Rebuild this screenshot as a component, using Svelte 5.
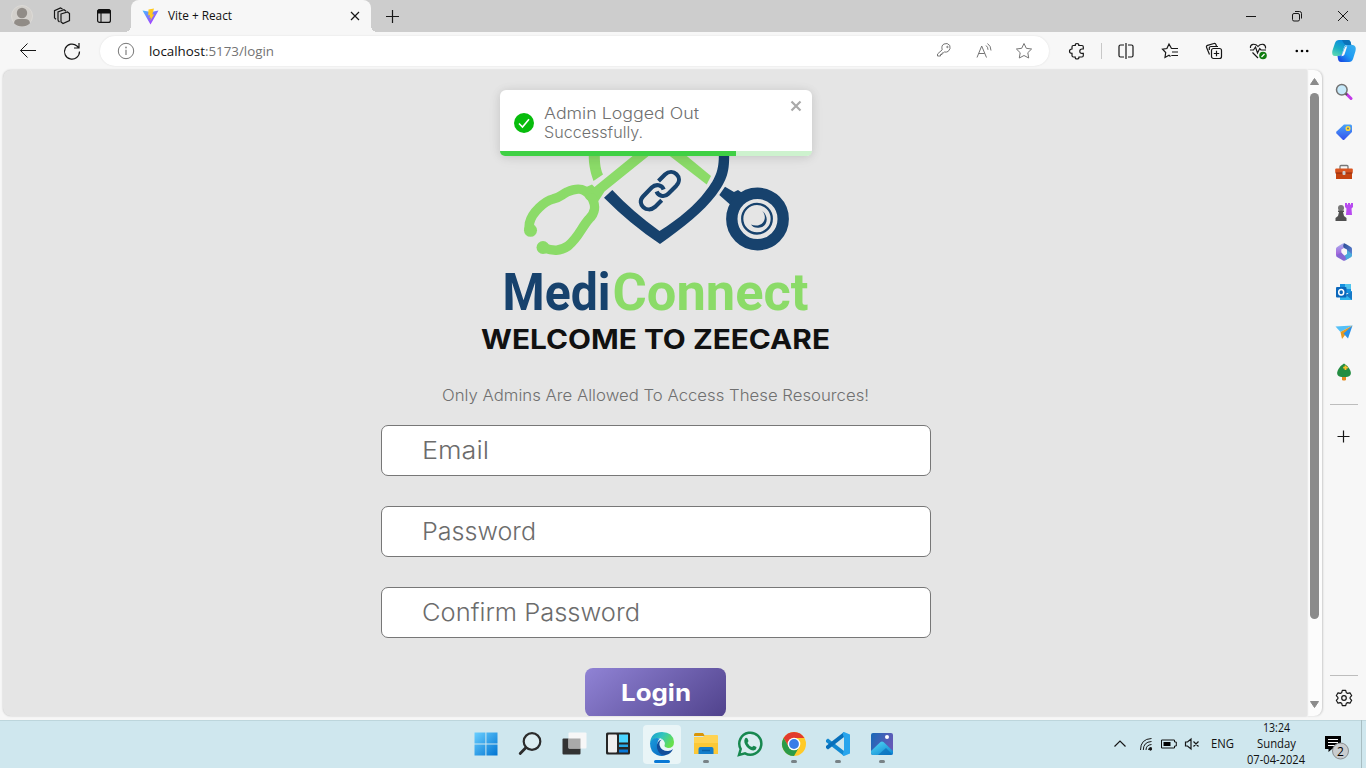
<script>
  const apps = ['start', 'search', 'tasks', 'widgets', 'edge', 'files', 'whatsapp', 'chrome', 'code', 'photos'];
  const running = ['files', 'chrome', 'code', 'photos'];
  const tools = ['lens', 'tag', 'case', 'chess', 'm365', 'outlook', 'drop', 'tree'];
  const fields = [
    { label: 'Email', w: 67 },
    { label: 'Password', w: 114 },
    { label: 'Confirm Password', w: 218 }
  ];
</script>

{#snippet fit(text, w, h, base, cls)}
  <svg class="fit {cls}" width={w} height={h}><text x="0" y={base} textLength={w} lengthAdjust="spacingAndGlyphs">{text}</text></svg>
{/snippet}

<div class="screen">
  <header class="titlebar">
    <span class="slot profile"><svg width="22" height="22" viewBox="0 0 22 22"><circle cx="11" cy="11" r="10.5" fill="#d3d0cc" stroke="#dcdad7" /><circle cx="11" cy="8" r="5.2" fill="#918c87" /><path d="M3 18.2Q3.500 14 8 14H14Q18.500 14 19 18.200Q15.500 21.500 11 21.500T3 18.200Z" fill="#918c87" /></svg></span>
    <span class="slot spaces"><svg width="18" height="18" viewBox="0 0 18 18" class="line bold"><path d="M8 7 14.500 5 16.500 6.500V13.500L10 16.500 8 15ZM5 13.500V5L11 2.800 13 4.300M5 13.500 6.500 15M1.500 11V3.700L7.500 1 9.500 2M1.500 11 3 12.300" /></svg></span>
    <span class="slot tabmenu"><svg width="16" height="16" viewBox="0 0 16 16"><rect x="1.600" y="1.600" width="12.800" height="12.800" rx="2" fill="none" stroke="#111" stroke-width="1.200" /><path d="M2 2H14V5H2Z" fill="#111" stroke="#111" /><path d="M5 5V14" stroke="#111" stroke-width="1.100" /></svg></span>
    <div class="tab">
      <svg width="17" height="17" viewBox="0 0 17 17">
        <defs><linearGradient id="v" x1="0" y1="0" x2=".8" y2="1"><stop offset="0" stop-color="#45bdff" /><stop offset="1" stop-color="#b42bff" /></linearGradient></defs>
        <path d="M.5 2.500 8.500 16.500 16.500 2.500 9 4Z" fill="url(#v)" /><path d="M12 .5 6.500 1.600 6.200 7.500 8 7.100 7.500 10 9 9.600 8.300 13 12.200 6.300 10.300 6.600Z" fill="#ffc91f" />
      </svg>
      <span class="name">{@render fit('Vite + React', 64, 16, 12, 'ui')}</span>
      <svg class="line bold" width="10" height="10" viewBox="0 0 10 10"><path d="M1 1 9 9M9 1 1 9" /></svg>
    </div>
    <span class="slot add"><svg class="line bold" width="15" height="15" viewBox="0 0 15 15"><path d="M7.500 1V14M1 7.500H14" /></svg></span>
    <div class="window">
      <span><svg class="line" width="12" height="12" viewBox="0 0 12 12"><path d="M1 6.500H11" /></svg></span>
      <span><svg class="line" width="12" height="12" viewBox="0 0 12 12"><rect x="1.500" y="3.500" width="7" height="7.500" rx="1.500" /><path d="M4 1.500H8.500Q10.500 1.500 10.500 3.500V8.500" /></svg></span>
      <span><svg class="line" width="12" height="12" viewBox="0 0 12 12"><path d="M1 1 11 11M11 1 1 11" /></svg></span>
    </div>
  </header>

  <div class="toolbar">
    <span class="nav"><svg class="line" width="20" height="20" viewBox="0 0 20 20"><path d="M18 9.500H2.500M9.500 2.500 2.500 9.500 9.500 16.500" /></svg></span>
    <span class="nav"><svg class="line" width="20" height="20" viewBox="0 0 20 20"><path d="M17.500 10.500A7.500 7.500 0 1 1 15 5L17 7M17 2V7H12" stroke-width="1.200" /></svg></span>
    <div class="address">
      <svg class="info" width="18" height="18" viewBox="0 0 18 18"><circle cx="9" cy="9" r="7.700" fill="none" stroke="#777" /><path d="M9 7.800V13" stroke="#888" stroke-width="1.300" /><circle cx="9" cy="5.500" r=".9" fill="#888" /></svg>
      <svg class="fit url" width="125" height="20"><text x="0" y="15" textLength="125" lengthAdjust="spacingAndGlyphs">localhost<tspan fill="#737373">:5173/login</tspan></text></svg>
      <div class="actions">
        <span><svg class="line soft" width="16" height="16" viewBox="0 0 16 16"><path d="M6.200 7.800Q5 3.500 8 2 11.500.300 13.800 3.500 15 7 12.200 9.400 10.300 10.500 8.300 10L7.200 11H6V12.500H4.500V14H1.500V12Z" /><circle cx="11.400" cy="5" r=".7" /></svg></span>
        <span><svg class="line soft" width="18" height="18" viewBox="0 0 18 18"><path d="M2 15.500 6.700 4 11.500 15.500M3.700 11.500H9.700M11 3.500Q13 5 13 7.800M12.500 1.500Q16 4 16 8.500" /></svg></span>
        <span><svg class="line soft" width="18" height="18" viewBox="0 0 18 18"><path d="M9 1.500 11.300 6.300 16.600 7 12.800 10.700 13.700 16 9 13.500 4.300 16 5.200 10.700 1.400 7 6.700 6.300Z" /></svg></span>
      </div>
    </div>
    <span class="ext"><svg class="line bold" width="18" height="18" viewBox="0 0 18 18"><path d="M5.200 3.500H7.300Q7 1.500 9 1.500T10.800 3.500H14Q15.300 3.500 15.300 5V7H14Q11.800 7 11.800 9.200T14 11.300H15.300V13.500Q15.300 15 14 15H11Q11 17 9 17T7.200 15H5.500Q4 15 4 13.500V11.300Q1.500 11.300 1.500 9.200T4 7V5Q4 3.500 5.200 3.500Z" /></svg></span>
    <i class="bar"></i>
    <div class="more">
      <span><svg class="line bold" width="18" height="18" viewBox="0 0 18 18"><path d="M7 3H3.500Q2 3 2 4.500V13.500Q2 15 3.500 15H7M11 3H14.500Q16 3 16 4.500V13.500Q16 15 14.500 15H11M9 1V17" /></svg></span>
      <span><svg class="line bold" width="18" height="18" viewBox="0 0 18 18"><path d="M10.500 6.500 8 2 5.900 6.500 1.500 7.200 4.700 10.500 4 15.500 8 13.300 9.500 14.500M10.300 6.500H17M11 10H17M10.300 13.500H17" /></svg></span>
      <span><svg class="line bold" width="18" height="18" viewBox="0 0 18 18"><rect x="6.500" y="6.500" width="10" height="10" rx="2" /><path d="M11.500 8.800V14.200M8.800 11.500H14.200M4.500 12.500 1.600 5.500Q1 4 2.500 3.400L9 1.500Q10.500 1.200 11 2.600L11.500 4.500M4.300 8V5.600Q4.500 4.500 6 4.500H13" /></svg></span>
      <span><svg class="line bold" width="18" height="18" viewBox="0 0 18 18"><path d="M1.500 6Q1 3 4 2.300 7 2 9 4.500 11 2 14 2.300 17 3 16.500 6.500M1 8H4.500L6.500 5 8.500 11 10.700 6.500 12 8H17M3.500 10.500 9 16" /><circle cx="14" cy="13.500" r="3.800" fill="#107c10" stroke="none" /><path d="M12.500 15 15.500 12" stroke="#fff" /></svg></span>
      <span><svg width="18" height="18" viewBox="0 0 18 18"><circle cx="3.800" cy="9" r="1.300" /><circle cx="9" cy="9" r="1.300" /><circle cx="14.200" cy="9" r="1.300" /></svg></span>
    </div>
    <svg class="copilot" width="26" height="24" viewBox="0 0 26 24">
      <defs><linearGradient id="c1" x1="0" y1="1" x2=".5" y2="0"><stop stop-color="#69dfae" /><stop offset=".5" stop-color="#1bafc4" /><stop offset="1" stop-color="#0c89df" /></linearGradient><linearGradient id="c2" x1="0" y1="1" x2="1" y2="0"><stop stop-color="#1537df" /><stop offset=".5" stop-color="#1e9cf4" /><stop offset="1" stop-color="#3bb0ee" /></linearGradient></defs>
      <path d="M8 1H17Q19 1 19.600 3L20.300 6H16Q13.500 6 12.800 9L11 15Q10 17 7 17H4Q.5 17 1.300 12L4 4Q5 1 8 1Z" fill="url(#c1)" />
      <path d="M11 1H17Q19 1 19.600 3L20.300 6H16Q13 6 11 1Z" fill="#0b72b8" />
      <path d="M18 23H10Q7.500 23 7 20L6.500 17Q10 17 11 15L13 9Q14 6 17 6H22Q25.700 7 24.500 12L22 20Q21 23 18 23Z" fill="url(#c2)" />
      <path d="M13.500 9.500Q14 7.300 16.200 7.300L13.500 15.500Q12.800 17.300 10.300 17.300Z" fill="#f7f7f7" />
    </svg>
  </div>

  <div class="body">
    <main>
      <div class="login">
        <svg class="logo" width="312" height="166" viewBox="500 154 312 166">
          <g fill="#8bdb68">
            <path d="M589 150C588 162 590 171 593.500 181L603 174.500C600 168 599.500 160 600 150Z" />
            <path d="M640 150H656L604.500 191.500 601 197 597 203 584 188 592 184.500 594.500 187Z" />
            <path d="M662 150H679.500L711 176 706.700 184.500Z" />
            <circle cx="530.500" cy="230.300" r="6.500" /><circle cx="543" cy="247.500" r="6.500" />
          </g>
          <g fill="none" stroke="#8bdb68" stroke-width="9.500" stroke-linecap="round">
            <path d="M590 196C584 187 576 188 567 192C561 195 559 198 553 199C545 201 532 212 529.500 223L529 229" />
            <path d="M592 198C596 206 596 212 589 219C581 228 579 237 568 246C560 251.500 553 251 544 248" />
          </g>
          <g fill="#17426d">
            <path d="M604 197.700 612.300 190Q633 212 659.500 231C680 218 695 205 705 192C717 177 719.500 168 718.700 150H729C730 172 727 180 716 195C703 212 684 227 660 244Q630 224 604 197.700Z" />
            <path d="M725 186.700 719.300 195 734 208 748 197 738 190 734 192Z" />
          </g>
          <circle cx="757.500" cy="219" r="25.700" fill="none" stroke="#17426d" stroke-width="11.400" />
          <circle cx="757" cy="218.700" r="14.800" fill="none" stroke="#17426d" stroke-width="2.300" />
          <path d="M762.300 211C769 216 768 226 760 227.500C756 228.500 752.500 227 751 224.500C755 226.300 760 226 763 222.500C766 218.500 765 214 762.300 211Z" fill="#17426d" />
          <g fill="none" stroke="#17426d" stroke-width="4.100">
            <path d="M658.500 181 665 174.500C673 167 684 177.500 676.300 185.700L668.300 193.700C664 198 658 195.500 656.600 191.500" />
            <path d="M661.700 200.200 655 206.900C647 214 636 204 643 196.500L651.700 187.500C656 183.500 662 185 663.700 189.500" />
          </g>
          <g class="brand">
            <text x="502.500" y="310" textLength="108" lengthAdjust="spacingAndGlyphs" fill="#17426d">Medi</text>
            <text x="612.500" y="310" textLength="196" lengthAdjust="spacingAndGlyphs" fill="#8bdb68">Connect</text>
          </g>
        </svg>
        <h1>{@render fit('WELCOME TO ZEECARE', 349, 36, 29, 'head')}</h1>
        <p>{@render fit('Only Admins Are Allowed To Access These Resources!', 427, 20, 16, 'sub')}</p>
        <form>
          {#each fields as f}
            <div class="field">{@render fit(f.label, f.w, 32, 24, 'hint')}</div>
          {/each}
          <button type="button">{@render fit('Login', 70, 32, 25, 'go')}</button>
        </form>
      </div>
      <div class="toast">
        <svg width="20" height="20" viewBox="0 0 20 20"><circle cx="10" cy="10" r="10" fill="#07bc0c" /><path d="M5 10.500 8.500 14 15 6.300" fill="none" stroke="#fff" stroke-width="1.600" /></svg>
        <div class="message">
          {@render fit('Admin Logged Out', 155, 19, 15, 'sub')}
          {@render fit('Successfully.', 99, 19, 15, 'sub')}
        </div>
        <svg class="dismiss" width="12" height="12" viewBox="0 0 12 12"><path d="M1.500 1.500 10.500 10.500M10.500 1.500 1.500 10.500" stroke="#a9a9a9" stroke-width="2.200" /></svg>
        <div class="progress"><i></i></div>
      </div>
    </main>
    <div class="scroll">
      <svg width="11" height="9" viewBox="0 0 11 9"><path d="M5.500 1.500 9.500 7.500H1.500Z" fill="#8b8b8b" stroke="#8b8b8b" stroke-linejoin="round" /></svg>
      <i></i>
      <svg class="down" width="11" height="9" viewBox="0 0 11 9"><path d="M5.500 7.500 9.500 1.500H1.500Z" fill="#8b8b8b" stroke="#8b8b8b" stroke-linejoin="round" /></svg>
    </div>
    <aside>
      {#each tools as t}
        <span class="tool">
          <svg width="18" height="18" viewBox="0 0 18 18">
            {#if t === 'lens'}
              <path d="M11.500 11 16 15.500" stroke="#c239e8" stroke-width="3" stroke-linecap="round" /><path d="M10 10 12 12" stroke="#555" stroke-width="2" /><circle cx="6.800" cy="6.700" r="5.300" fill="#c6e9fa" stroke="#737373" stroke-width="1.500" />
            {:else if t === 'tag'}
              <defs><linearGradient id="tg" x2="0" y2="1"><stop stop-color="#4aa3f8" /><stop offset="1" stop-color="#3552ed" /></linearGradient></defs>
              <path d="M9 1.500H15.500Q17 1.500 17 3V9L9.500 16.500Q8.500 17.500 7.500 16.500L1.500 10.500Q.7 9.500 1.500 8.500Z" fill="url(#tg)" /><circle cx="13" cy="5.500" r="1.800" fill="#678" stroke="#ffdc3c" stroke-width="1.500" />
            {:else if t === 'case'}
              <path d="M5 6V3.500Q5 2.500 6 2.500H12Q13 2.500 13 3.500V6" fill="none" stroke="#777" stroke-width="1.300" /><rect x=".2" y="5.500" width="17.600" height="4.500" rx="1" fill="#d9541f" /><path d="M1 10H17V16H1Z" fill="#c5430f" /><path d="M.5 10H17.500" stroke="#8c2a10" /><rect x="7.500" y="8" width="3" height="4" rx="1" fill="#ccc" />
            {:else if t === 'chess'}
              <path d="M10 0H12V1.500H13V0H15V1.500H16V0H18V4L16.500 5.500 17 12H11L11.500 5.500 10 4Z" fill="#b84af0" /><circle cx="6" cy="5" r="3" fill="#777" /><path d="M3 7.500H9V9H8L9 13 11.500 15V18H.5V15L3 13 4 9H3Z" fill="#505050" />
            {:else if t === 'm365'}
              <defs><linearGradient id="m1" x2="0" y2="1"><stop stop-color="#aab1ef" /><stop offset="1" stop-color="#a35bd8" /></linearGradient><linearGradient id="m2" x2="1" y2="1"><stop stop-color="#2b4b91" /><stop offset="1" stop-color="#6087db" /></linearGradient></defs>
              <path d="M9 .3Q7.500.300 1.800 4.200 1 4.800 1 6V12.500L6.300 11.300V6.500L10.800 4Z" fill="url(#m1)" /><path d="M9 .3Q10 .3 16.200 4.200 17 4.800 17 6V13L12 9.500V6.500L9 5Q7.500 2.500 9 .3Z" fill="url(#m2)" /><path d="M1 12.500 6.300 9.500 9.500 12.700 12 11.500 14 15 10 17.500Q9 18 8 17.500L2 14Q1 13.300 1 12.500Z" fill="#8666d4" /><path d="M12 7 17 11V12.500Q17 13.500 16 14.200L10 17.600Q12 15 9.500 12.700L12 11Z" fill="#49abdc" />
            {:else if t === 'outlook'}
              <path d="M5 1H16V10H5Z" fill="#1590df" /><path d="M10 1H16V6H10Z" fill="#50c5ee" /><path d="M5 8 11 12 17 8V17H5Z" fill="#2fb6ee" /><path d="M11 12 17 8V17Z" fill="#1679c7" /><rect x="1" y="4" width="10.500" height="10.500" rx="1" fill="#0b67bb" /><ellipse cx="6.200" cy="9.200" rx="2.500" ry="2.800" fill="none" stroke="#fff" stroke-width="1.500" />
            {:else if t === 'drop'}
              <path d="M.5 3.500 17.500 2.500 5.500 9Z" fill="#55c0f7" /><path d="M5.500 9 17.500 2.500 7 16Z" fill="#e69a22" /><path d="M8.500 10.500 17.500 2.500 13 15.500Z" fill="#2791eb" />
            {:else}
              <path d="M7 12H11V17Q9 18 7 17Z" fill="#e58a20" /><path d="M9 .5Q12 2 14.500 6 17 10 15 12.500 13.500 14 9 14T3 12.500Q1 10 3.500 6 6 2 9 .5Z" fill="#248d42" /><path d="M10.500 2.500V7M8.200 4.700H12.800" stroke="#ffc22c" stroke-width="1.800" />
            {/if}
          </svg>
        </span>
      {/each}
      <hr />
      <svg class="line bold plus" width="13" height="13" viewBox="0 0 13 13"><path d="M6.500 .5V12.500M.5 6.500H12.500" /></svg>
      <hr class="low" />
      <svg class="line bold gear" width="18" height="18" viewBox="0 0 18 18"><path d="M7.300 1.400H10.700L11.300 3.700 12.700 4.400 15 3.800 16.700 6.700 15.100 8.300V9.700L16.700 11.300 15 14.200 12.700 13.600 11.300 14.300 10.700 16.600H7.300L6.700 14.300 5.300 13.600 3 14.200 1.300 11.300 2.900 9.700V8.300L1.300 6.700 3 3.800 5.300 4.400 6.700 3.700Z" stroke-linejoin="round" /><circle cx="9" cy="9" r="2.300" /></svg>
    </aside>
  </div>

  <footer>
    <div class="apps">
      {#each apps as a}
        <span class="app" class:active={a === 'edge'}>
          <svg width="26" height="26" viewBox="0 0 26 26">
            {#if a === 'start'}
              <defs><linearGradient id="w" x2="1" y2="1"><stop stop-color="#6acfff" /><stop offset="1" stop-color="#0074d2" /></linearGradient></defs>
              <path d="M1.500 1.500H12.400V12.400H1.500ZM13.400 1.500H24.500V12.400H13.400ZM1.500 13.400H12.400V24.500H1.500ZM13.400 13.400H24.500V24.500H13.400Z" fill="url(#w)" />
            {:else if a === 'search'}
              <circle cx="15" cy="10.500" r="8.300" fill="#dcedf1" stroke="#2c2c2c" stroke-width="2.200" /><path d="M8.800 16.700 3.200 22.500" stroke="#2c2c2c" stroke-width="2.800" stroke-linecap="round" />
            {:else if a === 'tasks'}
              <rect x="1.500" y="7.500" width="18" height="16" rx="1" fill="#333" /><rect x="7.500" y="1.500" width="18" height="16" rx="1" fill="#f7f7f7" /><path d="M7.500 7.500H19.500V17.500H7.500Z" fill="#a9a9a9" />
            {:else if a === 'widgets'}
              <rect x="1" y="1.500" width="24" height="22" rx="1.500" fill="#252525" /><rect x="3" y="3.500" width="9" height="18" rx="1" fill="#eee" /><path d="M14 3.500H23V11.500H14Z" fill="#4bd4ff" /><path d="M14 13.500H23V16H14Z" fill="#26a9e8" /><path d="M14 18.500H23V21.500H14Z" fill="#0878d8" />
            {:else if a === 'edge'}
              <defs><linearGradient id="e1" x2="1" y2=".5"><stop stop-color="#1698d3" /><stop offset=".5" stop-color="#32c5bd" /><stop offset="1" stop-color="#66e04c" /></linearGradient><linearGradient id="e2" x2="1" y2="1"><stop stop-color="#199bdc" /><stop offset="1" stop-color="#0c67bf" /></linearGradient></defs>
              <path d="M1 12Q2 1 13 1 24 1 25 11 25 17 19 17 15 17 15.500 14.500 17 11 13 8 7 5 1 12Z" fill="url(#e1)" /><path d="M1 12Q4 5.500 11 7.500 8 10 8.500 14 9 23 17 24 13 26 8 24 1 21 1 12Z" fill="url(#e2)" /><path d="M13 8.500Q10 10 10.500 14 12 20 19 20 22 20 24 18 22 23 17 24 10 25 8 17 7 10 13 8.500Z" fill="#124e9b" /><path d="M14.500 13Q13 17 17 19 21 20 24 17 22 18 19 17 14 16 14.500 13Z" fill="#e9f5f7" />
            {:else if a === 'files'}
              <path d="M1 3.500Q1 2 2.500 2H10L12 5H1Z" fill="#d99508" /><path d="M1 6H10L12 4H24Q25 4 25 5V23H1Z" fill="#ffd352" /><path d="M1 12H25V23H1Z" fill="#fcc836" /><path d="M5.500 23V18Q5.500 16 7.500 16H18.500Q20.500 16 20.500 18V23Z" fill="#137dcb" /><path d="M9 19.500H17" stroke="#0860a5" stroke-width="1.500" />
            {:else if a === 'whatsapp'}
              <path d="M2 24 3.700 18A11 11 0 1 1 8 22.300Z" fill="#d8edf0" stroke="#17884f" stroke-width="2.500" /><path d="M8 7.500Q9 6 10.500 7.500L11.500 10 10.500 12Q12 15 15 16L16.700 14.700 19.500 16Q19.500 19 16.500 19.500 13 19.500 9.500 15.500 6 11 8 7.500Z" fill="#17884f" />
            {:else if a === 'chrome'}
              <circle cx="13" cy="13" r="12" fill="#ffca28" /><path d="M2.600 7A12 12 0 0 1 23.400 7H13L7.800 16Z" fill="#e23b2e" /><path d="M2.600 7 7.800 16 13 19 18.200 16 13 25A12 12 0 0 1 2.600 7Z" fill="#2b9b48" /><circle cx="13" cy="13" r="6.300" fill="#fff" /><circle cx="13" cy="13" r="4.900" fill="#397de8" />
            {:else if a === 'code'}
              <path d="M1 9 3 7.500 19 20V25L1 11Z" fill="#1288d1" /><path d="M1 17 3 18.500 19 6V1L1 15Z" fill="#0870bb" /><path d="M19 1 25 3.500V22.500L19 25 17.500 24 19 19V7L17.500 2Z" fill="#28a5ed" />
            {:else}
              <defs><linearGradient id="p" x2="1" y2=".4"><stop stop-color="#1769b7" /><stop offset="1" stop-color="#655ab7" /></linearGradient><linearGradient id="p2" x2=".8" y2="1"><stop stop-color="#55dcf6" /><stop offset="1" stop-color="#118ad4" /></linearGradient></defs>
              <rect x="2" y="2" width="22" height="22" rx="2" fill="url(#p)" /><path d="M2 20 11.500 11Q13 9.800 14.500 11L24 20V22Q24 24 22 24H4Q2 24 2 22Z" fill="url(#p2)" /><path d="M9 24 17 17 23 23 22 24Z" fill="#0768b7" opacity=".65" /><circle cx="18" cy="6" r="2" fill="#fff" />
            {/if}
          </svg>
          {#if running.includes(a)}<i></i>{/if}
          {#if a === 'edge'}<i class="wide"></i>{/if}
        </span>
      {/each}
    </div>
    <div class="tray">
      <svg class="line bold" width="14" height="14" viewBox="0 0 14 14"><path d="M1.500 9.500 7 4 12.500 9.500" /></svg>
      <svg class="line wifi" width="14" height="14" viewBox="0 0 14 14"><path d="M1.500 13Q1.500 2 12.500 1.500M4.300 13Q4.300 5 12.500 4.500M7 13Q7 8 12.500 7.500M9.500 13Q9.500 10.500 12.500 10.500" /><circle cx="11.500" cy="12" r="1.200" fill="#111" /></svg>
      <svg class="battery" width="16" height="10" viewBox="0 0 16 10"><path d="M.5 1H13.500V3H15.300V7H13.500V9H.5Z" fill="none" stroke="#111" /><path d="M2.500 3H9.500V7H2.500Z" /></svg>
      <svg class="line bold volume" width="16" height="14" viewBox="0 0 16 14"><path d="M1.500 5H3.500L7 2V12L3.500 9H1.500ZM9.500 4.500 14.500 9.500M14.500 4.500 9.500 9.500" /></svg>
      <span class="lang">{@render fit('ENG', 23, 16, 12, 'ui')}</span>
      <div class="clock">
        {@render fit('13:24', 27, 16, 12, 'ui')}
        {@render fit('Sunday', 39, 16, 12, 'ui')}
        {@render fit('07-04-2024', 58, 16, 12, 'ui')}
      </div>
      <svg class="notice" width="28" height="28" viewBox="0 0 28 28"><path d="M1 3H17V16H8L4.500 19V16H1Z" fill="#000" /><path d="M4 6.500H14M4 9.500H14M4 12.500H14" stroke="#fff" /><circle cx="16.500" cy="18" r="8" fill="#c9cdcf" stroke="#898d8f" /><text x="13" y="22.500">2</text></svg>
    </div>
  </footer>
</div>

<style>
  :global(body) { overflow: hidden; }
  .screen { width: 1366px; height: 768px; display: flex; flex-direction: column; background: #f7f7f7; font-family: "Open Sans", "Noto Sans", sans-serif; overflow: hidden; }
  svg { display: block; flex: none; }
  .fit, .logo { overflow: visible; }
  .line { fill: none; stroke: #171717; stroke-width: 1; }
  .bold { stroke-width: 1.2; }
  .soft { stroke: #757575; }
  .ui { font-size: 12px; fill: #111; }
  .url { font-size: 13.5px; fill: #111; }
  .sub, .head, .hint, .go { font-family: Inter, sans-serif; }
  .sub { font-size: 15.5px; font-weight: 300; fill: #707070; }
  .head { font-size: 27px; font-weight: 700; fill: #111; }
  .hint { font-size: 24px; font-weight: 300; fill: #6c6c6c; }
  .go { font-size: 23.5px; font-weight: 700; fill: #fff; }
  .brand { font: 700 51.5px Roboto, sans-serif; }

  .titlebar { height: 32px; flex: none; background: #cdcdcd; display: flex; align-items: center; }
  .slot { display: flex; justify-content: center; }
  .profile { width: 44px; }
  .spaces { width: 36px; }
  .tabmenu { width: 48px; }
  .tab { box-sizing: border-box; width: 240px; height: 32px; margin-left: 3px; padding: 0 11px; display: flex; align-items: center; background: #f7f7f7; border-radius: 8px 8px 0 0; position: relative; }
  .tab::before, .tab::after { content: ""; position: absolute; bottom: 0; width: 6px; height: 6px; }
  .tab::before { left: -6px; background: radial-gradient(circle at 0 0, #cdcdcd 6px, #f7f7f7 6px); }
  .tab::after { right: -6px; background: radial-gradient(circle at 100% 0, #cdcdcd 6px, #f7f7f7 6px); }
  .name { margin: 0 auto 0 9px; }
  .add { width: 43px; }
  .window { margin-left: auto; display: flex; }
  .window span { width: 46px; display: flex; justify-content: center; }

  .toolbar { height: 38px; flex: none; display: flex; align-items: center; box-sizing: border-box; padding: 0 0 1px 6px; }
  .nav { width: 44px; display: flex; justify-content: center; }
  .address { width: 949px; height: 30px; margin-left: 6px; border-radius: 15px; background: #fff; display: flex; align-items: center; box-shadow: 0 0 2px #ddd; }
  .info { margin: 0 14px 0 17px; }
  .actions { margin: 0 5px 0 auto; display: flex; }
  .actions span { width: 40px; display: flex; justify-content: center; }
  .ext { margin-left: 19px; }
  .bar { width: 1px; height: 16px; background: #c8c8c8; margin-left: 15px; }
  .more { display: flex; margin-left: 2px; }
  .more span { width: 44px; display: flex; justify-content: center; }
  .copilot { margin-left: 7px; }

  .body { height: 650px; flex: none; display: flex; box-sizing: border-box; padding: 0 0 4px 3px; }
  main { width: 1304px; height: 646px; background: #e5e5e5; border-radius: 8px 0 0 8px; position: relative; overflow: hidden; box-shadow: 0 0 2px #bbb; }
  .login { padding-top: 84px; display: flex; flex-direction: column; align-items: center; padding-left: 1px; }
  h1, p { margin: 0; }
  h1 { height: 36px; }
  p { height: 20px; margin-top: 29px; }
  form { margin-top: 20px; width: 550px; display: flex; flex-direction: column; align-items: center; gap: 30px; }
  .field { box-sizing: border-box; width: 550px; height: 51px; border: 1px solid #777; border-radius: 7px; background: #fff; padding: 9px 40px; }
  button { width: 141px; height: 49px; flex: none; padding: 0 0 1px; display: flex; align-items: center; justify-content: center; border: 0; border-radius: 8px; background: linear-gradient(140deg, #9083d5, #50428c); }
  .toast { position: absolute; left: 497px; top: 20px; width: 312px; height: 66px; background: #fff; border-radius: 6px; box-sizing: border-box; padding: 14px; display: flex; box-shadow: 0 1px 10px rgba(0,0,0,.1), 0 2px 15px rgba(0,0,0,.05); }
  .toast > svg:first-child { margin-top: 9px; }
  .message { margin: 0 auto 0 9.5px; }
  .dismiss { margin: -4px -4px 0 0; }
  .progress { position: absolute; left: 0; right: 0; bottom: 0; height: 5px; border-radius: 0 0 6px 6px; background: #cdf2ce; overflow: hidden; }
  .progress i { display: block; width: 236px; height: 5px; background: #3fd044; }
  .scroll { box-sizing: border-box; width: 15px; height: 646px; background: #fcfcfc; border-radius: 0 8px 8px 0; display: flex; flex-direction: column; align-items: center; padding: 7px 0; box-shadow: 1px 0 2px #ccc; }
  .scroll i { width: 9px; height: 526px; border-radius: 5px; background: #8b8b8b; margin-top: 7px; }
  .down { margin-top: auto; }
  aside { width: 43px; display: flex; flex-direction: column; align-items: center; padding-top: 2px; box-sizing: border-box; }
  .tool { height: 40px; flex: none; display: flex; align-items: center; }
  hr { width: 28px; height: 1px; flex: none; border: 0; margin: 12px 0 0; background: #bdbdbd; }
  .plus { margin-top: 25px; }
  .low { margin-top: 232px; }
  .gear { margin-top: 13px; }

  footer { height: 48px; flex: none; background: #cfe7ee; border-top: 1px solid #bdd6dc; box-sizing: border-box; display: flex; }
  .apps { margin-left: 464px; display: flex; gap: 4px; }
  .app { box-sizing: border-box; width: 40px; height: 47px; padding-bottom: 1px; display: flex; flex-direction: column; align-items: center; justify-content: center; position: relative; margin-left: 2px; margin-right: -2px; }
  .app i { position: absolute; bottom: 5px; width: 6px; height: 3px; border-radius: 2px; background: #788286; }
  .app i.wide { width: 16px; background: #0878d5; }
  .active::before { content: ""; position: absolute; inset: 4px 1px; background: #e9f5f7; border-radius: 4px; }
  .app svg { position: relative; }
  .tray { margin-left: auto; padding: 0 4px 1px 0; display: flex; align-items: center; }
  .tray::after { content: ""; width: 1px; height: 48px; background: #a8bdc2; }
  .wifi { margin-left: 12px; }
  .battery { margin-left: 8px; }
  .volume { margin-left: 7px; }
  .lang { margin-left: 11px; }
  .clock { width: 60px; margin-left: 12px; display: flex; flex-direction: column; align-items: center; }
  .notice { margin: 1px 9px 0 18px; padding-top: 4px; font-size: 12px; }
</style>
